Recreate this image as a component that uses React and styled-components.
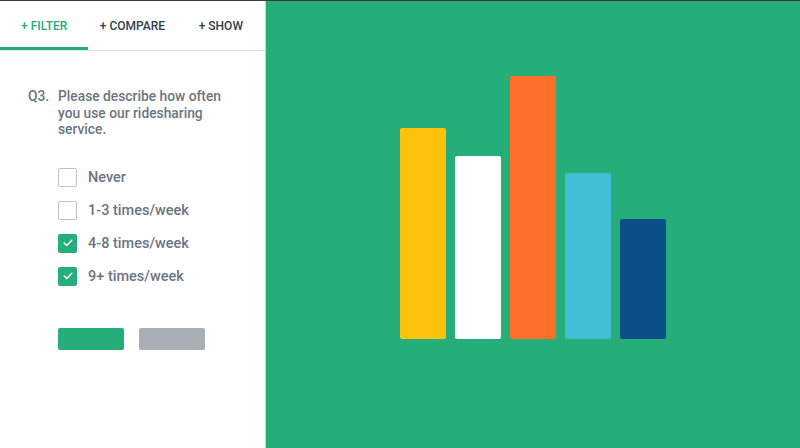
import React from "react";
import styled, { createGlobalStyle } from "styled-components";

const GlobalStyle = createGlobalStyle`
  html, body {
    margin: 0;
    padding: 0;
    background: #ffffff;
  }
  body {
    font-family: Roboto, "Open Sans", "Liberation Sans", sans-serif;
  }
`;

const GREEN = "#25ad7a";

// STYLES
const Screen = styled.div`
  width: 800px;
  height: 448px;
  display: flex;
  border-top: 1px solid #3a3a3a;
  box-sizing: border-box;
  overflow: hidden;
`;

const Sidebar = styled.aside`
  width: 265px;
  flex-shrink: 0;
  border-right: 1px solid #c8cfcd;
  background: #ffffff;
  display: flex;
  flex-direction: column;
`;

const Tabs = styled.nav`
  display: flex;
  height: 49px;
  border-bottom: 1px solid #dde2e1;
`;

const Tab = styled.div`
  flex: 1;
  display: flex;
  align-items: center;
  justify-content: center;
  font-size: 12px;
  font-weight: 500;
  color: ${(p) => (p.active ? GREEN : "#333e48")};
  box-shadow: ${(p) => (p.active ? `inset 0 -3px 0 ${GREEN}` : "none")};
`;

const Question = styled.div`
  display: flex;
  margin: 37px 0 0 28px;
  font-size: 13.8px;
  font-weight: 500;
  line-height: 16.5px;
  color: #6b7580;
`;

const Number = styled.span`
  width: 30px;
  flex-shrink: 0;
`;

const QuestionText = styled.p`
  margin: 0;
  width: 175px;
`;

const Options = styled.ul`
  list-style: none;
  margin: 30px 0 0 58px;
  padding: 0;
  display: flex;
  flex-direction: column;
  gap: 14px;
`;

const Option = styled.li`
  display: flex;
  align-items: center;
  gap: 11px;
  height: 19px;
  font-size: 14.5px;
  font-weight: 500;
  color: #6b7580;
`;

const Box = styled.span`
  width: 19px;
  height: 19px;
  box-sizing: border-box;
  border-radius: 2px;
  border: ${(p) => (p.checked ? "none" : "1.5px solid #bfc4c8")};
  background: ${(p) => (p.checked ? GREEN : "#ffffff")};
  display: flex;
  align-items: center;
  justify-content: center;
`;

const Actions = styled.div`
  display: flex;
  gap: 15px;
  margin: 42px 0 0 58px;
`;

const Button = styled.div`
  width: 66px;
  height: 22px;
  border-radius: 2px;
  background: ${(p) => (p.secondary ? "#a8aeb4" : GREEN)};
`;

const Stage = styled.main`
  flex: 1;
  background: ${GREEN};
  display: flex;
  justify-content: center;
  padding-top: 75px;
`;

const Chart = styled.div`
  height: 263px;
  display: flex;
  align-items: flex-end;
  gap: 9px;
`;

const Bar = styled.div`
  width: 46px;
  border-radius: 2px;
  background: ${(p) => p.color};
`;

const tabs = ["+ FILTER", "+ COMPARE", "+ SHOW"];

const options = [
  { label: "Never", checked: false },
  { label: "1-3 times/week", checked: false },
  { label: "4-8 times/week", checked: true },
  { label: "9+ times/week", checked: true },
];

const bars = [
  { color: "#fdc20e", height: 211 },
  { color: "#ffffff", height: 183 },
  { color: "#fe6f29", height: 263 },
  { color: "#43bfd5", height: 166 },
  { color: "#0b4f89", height: 120 },
];

const Check = () => (
  <svg width="10" height="8" viewBox="0 0 11 9" fill="none">
    <path
      d="M1.2 4.6 L4.1 7.3 L9.8 1.4"
      stroke="#ffffff"
      strokeWidth="1.6"
      strokeLinecap="round"
      strokeLinejoin="round"
    />
  </svg>
);

const App = () => {
  return (
    <>
      <GlobalStyle />
      <Screen>
        <Sidebar>
          <Tabs>
            {tabs.map((t, i) => (
              <Tab key={t} active={i === 0}>
                {t}
              </Tab>
            ))}
          </Tabs>
          <Question>
            <Number>Q3.</Number>
            <QuestionText>
              Please describe how often you use our ridesharing service.
            </QuestionText>
          </Question>
          <Options>
            {options.map((o) => (
              <Option key={o.label}>
                <Box checked={o.checked}>{o.checked && <Check />}</Box>
                {o.label}
              </Option>
            ))}
          </Options>
          <Actions>
            <Button />
            <Button secondary />
          </Actions>
        </Sidebar>
        <Stage>
          <Chart>
            {bars.map((b, i) => (
              <Bar
                key={i}
                color={b.color}
                style={{ height: b.height }}
              />
            ))}
          </Chart>
        </Stage>
      </Screen>
    </>
  );
};

export default App;
